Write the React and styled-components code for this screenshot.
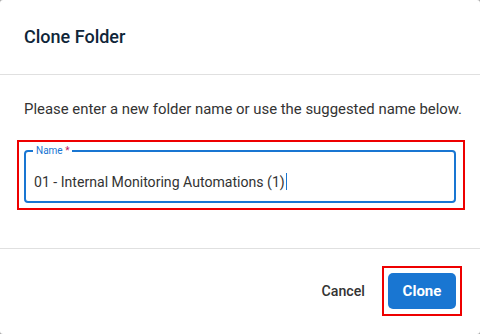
import styled, { createGlobalStyle } from "styled-components"

const GlobalStyle = createGlobalStyle`
  html, body {
    margin: 0;
    padding: 0;
    background: #a8a8a8;
  }
  * { box-sizing: border-box; }
`

const Dialog = styled.div`
  width: 480px;
  height: 334px;
  background: #fff;
  border-radius: 3px;
  display: flex;
  flex-direction: column;
  font-family: Roboto, "Liberation Sans", sans-serif;
  overflow: hidden;
`

const Header = styled.div`
  height: 75px;
  padding: 0 24px;
  display: flex;
  align-items: center;
  border-bottom: 1px solid #e0e0e0;
`

const Title = styled.h2`
  margin: 0;
  font-size: 18px;
  font-weight: 500;
  color: #0f2639;
  padding-bottom: 2px;
`

const Body = styled.div`
  padding: 24px 24px 0;
  flex: 0 0 174px;
  border-bottom: 1px solid #e0e0e0;
`

const Hint = styled.p`
  margin: 0 0 26px;
  font-size: 14.9px;
  line-height: 20px;
  white-space: nowrap;
  color: #333;
`

const Highlight = styled.div`
  position: relative;

  &::after {
    content: "";
    position: absolute;
    left: -7px;
    right: -9px;
    top: -5px;
    bottom: -7px;
    border: 2px solid #ee0000;
    pointer-events: none;
  }
`

const Field = styled.fieldset`
  margin: 0;
  padding: 0 8px 0 8px;
  border: 2px solid ${({ color }) => color || "#1976d2"};
  border-radius: 4px;
  height: 58px;
`

const Legend = styled.legend`
  font-size: 10px;
  line-height: 12px;
  color: #1976d2;
  padding: 0 3px;
  margin-left: -1px;

  span {
    color: #c2185b;
  }
`

const Value = styled.div`
  display: flex;
  align-items: center;
  height: 40px;
  padding-top: 9px;
  font-size: 14.1px;
  white-space: nowrap;
  color: #333;
`

const Caret = styled.span`
  display: inline-block;
  width: 1px;
  height: 17px;
  margin-left: 1px;
  background: #1976d2;
`

const Footer = styled.div`
  flex: 1;
  display: flex;
  align-items: center;
  justify-content: flex-end;
  gap: 17px;
  padding: 0 24px 2px;
`

const TextButton = styled.button`
  border: none;
  background: none;
  padding: 0;
  font-family: inherit;
  font-size: 14.2px;
  font-weight: 500;
  color: #333;
  cursor: pointer;
`

const Outlined = styled.div`
  border: 2px solid #ee0000;
  padding: 5px 4px;
  margin-right: -6px;
  display: flex;
`

const PrimaryButton = styled.button`
  border: none;
  background: #1976d2;
  color: #fff;
  height: 36px;
  width: 68px;
  border-radius: 5px;
  font-family: inherit;
  font-size: 15px;
  font-weight: 700;
  cursor: pointer;
`

export default function App() {
  return (
    <>
      <GlobalStyle />
      <Dialog>
        <Header>
          <Title>Clone Folder</Title>
        </Header>
        <Body>
          <Hint>Please enter a new folder name or use the suggested name below.</Hint>
          <Highlight>
            <Field>
              <Legend>
                Name <span>*</span>
              </Legend>
              <Value>
                01 - Internal Monitoring Automations (1)
                <Caret />
              </Value>
            </Field>
          </Highlight>
        </Body>
        <Footer>
          <TextButton>Cancel</TextButton>
          <Outlined>
            <PrimaryButton>Clone</PrimaryButton>
          </Outlined>
        </Footer>
      </Dialog>
    </>
  )
}
